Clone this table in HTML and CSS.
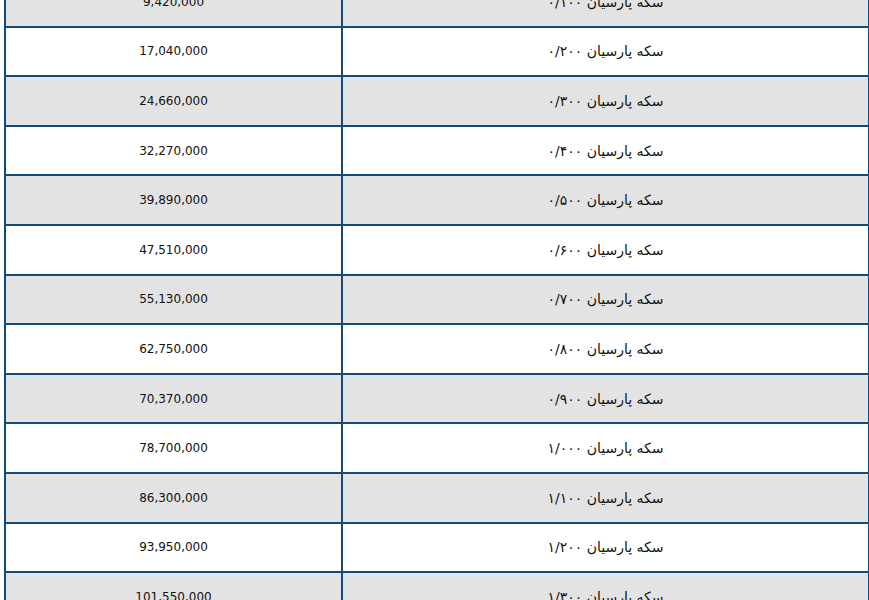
FILE: index.html
```html
<!DOCTYPE html>
<html lang="fa">
<head>
<meta charset="utf-8">
<link rel="stylesheet" href="styles.css">
</head>
<body>
<table class="prices">
  <colgroup><col class="c-price"><col class="c-name"></colgroup>
  <tbody>
    <tr class="alt"><td class="num">9,420,000</td><td class="name">سکه پارسیان ۰/۱۰۰</td></tr>
    <tr><td class="num">17,040,000</td><td class="name">سکه پارسیان ۰/۲۰۰</td></tr>
    <tr class="alt"><td class="num">24,660,000</td><td class="name">سکه پارسیان ۰/۳۰۰</td></tr>
    <tr><td class="num">32,270,000</td><td class="name">سکه پارسیان ۰/۴۰۰</td></tr>
    <tr class="alt"><td class="num">39,890,000</td><td class="name">سکه پارسیان ۰/۵۰۰</td></tr>
    <tr><td class="num">47,510,000</td><td class="name">سکه پارسیان ۰/۶۰۰</td></tr>
    <tr class="alt"><td class="num">55,130,000</td><td class="name">سکه پارسیان ۰/۷۰۰</td></tr>
    <tr><td class="num">62,750,000</td><td class="name">سکه پارسیان ۰/۸۰۰</td></tr>
    <tr class="alt"><td class="num">70,370,000</td><td class="name">سکه پارسیان ۰/۹۰۰</td></tr>
    <tr><td class="num">78,700,000</td><td class="name">سکه پارسیان ۱/۰۰۰</td></tr>
    <tr class="alt"><td class="num">86,300,000</td><td class="name">سکه پارسیان ۱/۱۰۰</td></tr>
    <tr><td class="num">93,950,000</td><td class="name">سکه پارسیان ۱/۲۰۰</td></tr>
    <tr class="alt"><td class="num">101,550,000</td><td class="name">سکه پارسیان ۱/۳۰۰</td></tr>
  </tbody>
</table>
</body>
</html>
```
FILE: styles.css
```css
html, body {
  margin: 0;
  padding: 0;
  background: #ffffff;
}
body {
  overflow: hidden;
}
.prices {
  border-collapse: collapse;
  width: 864px;
  margin: -24px 0 0 4px;
  font-family: "DejaVu Sans", Tahoma, sans-serif;
  font-size: 12px;
  color: #111111;
  table-layout: fixed;
}
.c-price { width: 337px; }
.c-name { width: 527px; }
.prices tr {
  height: 49.6px;
}
.prices td {
  border: 2px solid #154a7c;
  text-align: center;
  vertical-align: middle;
  padding: 0;
}
.prices tr.alt td {
  background: #e3e3e3;
}
.prices td.name {
  direction: rtl;
  font-size: 14px;
}
```
